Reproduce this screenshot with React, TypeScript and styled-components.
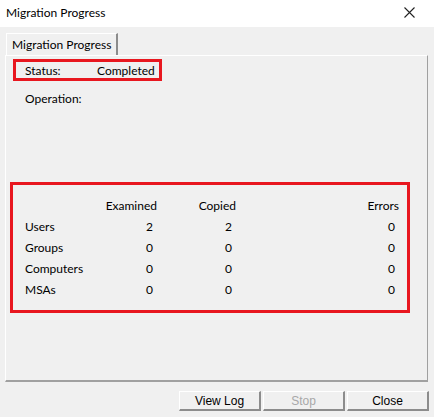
import React from 'react';
import styled, { createGlobalStyle } from 'styled-components';

const GlobalStyle = createGlobalStyle`
    html, body {
        margin: 0;
        padding: 0;
        background: #f0f0f0;
    }
    body {
        font-family: Lato, "Noto Sans", sans-serif;
        font-size: 12px;
        color: #000;
    }
`;

const Dialog = styled.div`
    width: 434px;
    height: 417px;
    background: #f0f0f0;
    display: flex;
    flex-direction: column;
    overflow: hidden;
`;

const TitleBar = styled.div`
    height: 27px;
    background: #fff;
    display: flex;
    align-items: center;
    justify-content: space-between;
    padding: 0 19px 2px 6px;
    box-sizing: border-box;
    font-size: 12px;
`;

const CloseGlyph = styled.svg`
    width: 11px;
    height: 11px;
`;

const Body = styled.div`
    flex: 1;
    display: flex;
    flex-direction: column;
    padding: 6px 6px 0 5px;
`;

const TabStrip = styled.div`
    display: flex;
    height: 22px;
    padding-left: 1px;
`;

const Tab = styled.div`
    height: 22px;
    box-sizing: border-box;
    padding: 0 5px 0 5px;
    display: flex;
    align-items: center;
    border-top: 1px solid #fff;
    border-left: 1px solid #fff;
    border-right: 2px solid #8c8c8c;
    font-size: 12px;
`;

const Panel = styled.div`
    height: 327px;
    box-sizing: border-box;
    border-top: 1px solid #fff;
    border-left: 1px solid #fff;
    border-right: 1px solid #a0a0a0;
    border-bottom: 2px solid #a0a0a0;
    display: flex;
    flex-direction: column;
    align-items: flex-start;
    padding: 3px 0 0 4px;
`;

const Highlight = styled.div<{ $width: number; $top?: number; $left?: number }>`
    width: ${p => p.$width}px;
    margin-top: ${p => p.$top ?? 0}px;
    margin-left: ${p => p.$left ?? 0}px;
    border: 3px solid #e8171f;
    box-sizing: border-box;
`;

const StatusRow = styled.div`
    display: flex;
    align-items: center;
    height: 16px;
    padding-left: 9px;
`;

const StatusLabel = styled.span`
    width: 72px;
`;

const Operation = styled.div`
    margin: 10px 0 0 15px;
    height: 16px;
    line-height: 16px;
`;

const Table = styled.div`
    display: grid;
    grid-template-columns: 80px 52px 79px 163px;
    grid-auto-rows: 21px;
    padding: 10px 0 10px 12px;
    align-items: center;
`;

const Head = styled.div`
    text-align: right;
`;

const Label = styled.div``;

const Num = styled.div`
    text-align: right;
    padding-right: 4px;
`;

const Footer = styled.div`
    display: flex;
    justify-content: flex-end;
    gap: 2px;
    padding: 9px 0 0 0;
    margin-right: -1px;
`;

const Button = styled.button<{ $disabled?: boolean }>`
    width: 82px;
    height: 20px;
    margin: 0;
    padding: 0;
    background: #f0f0f0;
    border-top: 1px solid #fff;
    border-left: 1px solid #fff;
    border-right: 2px solid #8c8c8c;
    border-bottom: 2px solid #8c8c8c;
    font-family: "Liberation Sans", Arial, sans-serif;
    font-size: 12px;
    color: ${p => (p.$disabled ? '#a8a8a8' : '#000')};
`;

const rows = [
    { name: 'Users', examined: 2, copied: 2, errors: 0 },
    { name: 'Groups', examined: 0, copied: 0, errors: 0 },
    { name: 'Computers', examined: 0, copied: 0, errors: 0 },
    { name: 'MSAs', examined: 0, copied: 0, errors: 0 },
];

export default function App() {
    return (
        <Dialog>
            <GlobalStyle />
            <TitleBar>
                <span>Migration Progress</span>
                <CloseGlyph viewBox="0 0 11 11">
                    <path d="M0.5 0.5L10.5 10.5M10.5 0.5L0.5 10.5" stroke="#222" strokeWidth="1.1" />
                </CloseGlyph>
            </TitleBar>
            <Body>
                <TabStrip>
                    <Tab>Migration Progress</Tab>
                </TabStrip>
                <Panel>
                    <Highlight $width={149} $left={3}>
                        <StatusRow>
                            <StatusLabel>Status:</StatusLabel>
                            <span>Completed</span>
                        </StatusRow>
                    </Highlight>
                    <Operation>Operation:</Operation>
                    <Highlight $width={400} $top={75}>
                        <Table>
                            <div />
                            <Head>Examined</Head>
                            <Head>Copied</Head>
                            <Head>Errors</Head>
                            {rows.map(r => (
                                <React.Fragment key={r.name}>
                                    <Label>{r.name}</Label>
                                    <Num>{r.examined}</Num>
                                    <Num>{r.copied}</Num>
                                    <Num>{r.errors}</Num>
                                </React.Fragment>
                            ))}
                        </Table>
                    </Highlight>
                </Panel>
                <Footer>
                    <Button>View Log</Button>
                    <Button $disabled>Stop</Button>
                    <Button>Close</Button>
                </Footer>
            </Body>
        </Dialog>
    );
}
